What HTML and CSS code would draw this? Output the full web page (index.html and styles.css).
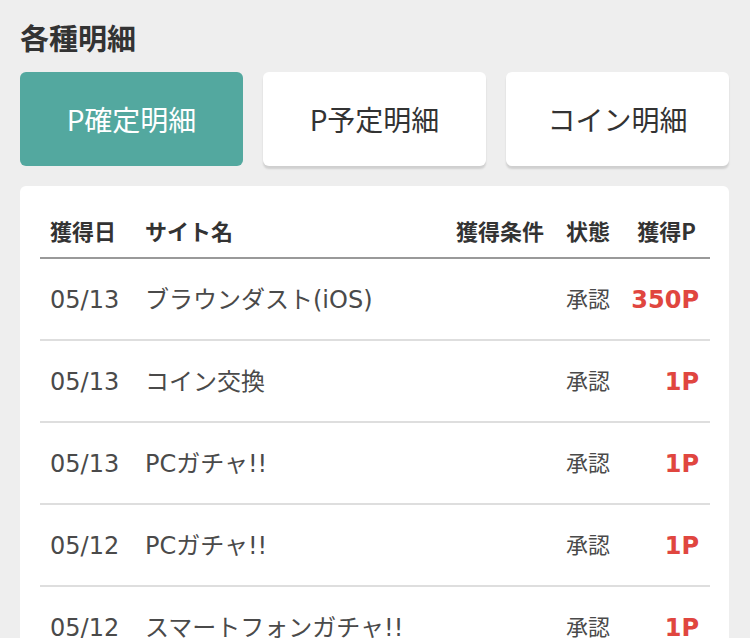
FILE: index.html
```html
<!DOCTYPE html>
<html lang="ja">
<head>
<meta charset="utf-8">
<link rel="stylesheet" href="styles.css">
</head>
<body>
<div class="page">
  <h1 class="title">各種明細</h1>
  <div class="tabs">
    <div class="tab tab-active">P確定明細</div>
    <div class="tab">P予定明細</div>
    <div class="tab">コイン明細</div>
  </div>
  <div class="card">
    <div class="row head">
      <div class="c-date">獲得日</div>
      <div class="c-site">サイト名</div>
      <div class="c-cond">獲得条件</div>
      <div class="c-state">状態</div>
      <div class="c-pt">獲得P</div>
    </div>
    <div class="row">
      <div class="c-date">05/13</div>
      <div class="c-site">ブラウンダスト(iOS)</div>
      <div class="c-cond"></div>
      <div class="c-state">承認</div>
      <div class="c-pt pt">350P</div>
    </div>
    <div class="row">
      <div class="c-date">05/13</div>
      <div class="c-site">コイン交換</div>
      <div class="c-cond"></div>
      <div class="c-state">承認</div>
      <div class="c-pt pt">1P</div>
    </div>
    <div class="row">
      <div class="c-date">05/13</div>
      <div class="c-site">PCガチャ!!</div>
      <div class="c-cond"></div>
      <div class="c-state">承認</div>
      <div class="c-pt pt">1P</div>
    </div>
    <div class="row">
      <div class="c-date">05/12</div>
      <div class="c-site">PCガチャ!!</div>
      <div class="c-cond"></div>
      <div class="c-state">承認</div>
      <div class="c-pt pt">1P</div>
    </div>
    <div class="row">
      <div class="c-date">05/12</div>
      <div class="c-site">スマートフォンガチャ!!</div>
      <div class="c-cond"></div>
      <div class="c-state">承認</div>
      <div class="c-pt pt">1P</div>
    </div>
  </div>
</div>
</body>
</html>
```

FILE: styles.css
```css
html, body {
  margin: 0;
  padding: 0;
  background: #eeeeee;
}
body {
  font-family: "Noto Sans CJK JP", "Noto Sans", sans-serif;
  color: #333;
}
.page {
  padding: 19px 21px 0 20px;
}
.title {
  margin: 0;
  font-size: 29px;
  line-height: 36px;
  font-weight: bold;
  color: #333;
}
.tabs {
  display: grid;
  grid-template-columns: 1fr 1fr 1fr;
  column-gap: 20px;
  margin-top: 17px;
}
.tab {
  height: 94px;
  border-radius: 6px;
  background: #fff;
  box-shadow: 0 3px 2px rgba(0, 0, 0, 0.13);
  display: flex;
  align-items: center;
  justify-content: center;
  font-size: 28px;
  color: #333;
}
.tab-active {
  background: #53a89f;
  color: #fff;
  box-shadow: none;
}
.card {
  margin-top: 20px;
  background: #fff;
  border-radius: 6px;
  padding: 21px 19px 0 20px;
  height: 500px;
}
.row {
  display: grid;
  grid-template-columns: 95px 1fr 110px 63px 91px;
  align-items: center;
  height: 80px;
  border-bottom: 2px solid #dedede;
  font-family: "DejaVu Sans", "Noto Sans CJK JP", sans-serif;
  font-size: 24px;
  line-height: 32px;
  color: #4a4a4a;
}
.row > div {
  padding-top: 1px;
}
.row .c-state {
  font-size: 22px;
}
.row.head {
  height: 50px;
  border-bottom: 2px solid #999;
  font-family: "Noto Sans CJK JP", sans-serif;
  font-size: 22px;
  line-height: 30px;
  font-weight: bold;
  color: #333;
}
.row.head > div {
  padding-top: 0;
  padding-bottom: 5px;
}
.c-date, .c-site, .c-cond, .c-state {
  padding-left: 10px;
  white-space: nowrap;
}
.c-pt {
  text-align: right;
  padding-right: 13px;
}
.head .c-pt {
  padding-right: 14px;
}
.pt {
  color: #e0463f;
  font-weight: bold;
  font-size: 24px;
  padding-right: 11px;
}
```
